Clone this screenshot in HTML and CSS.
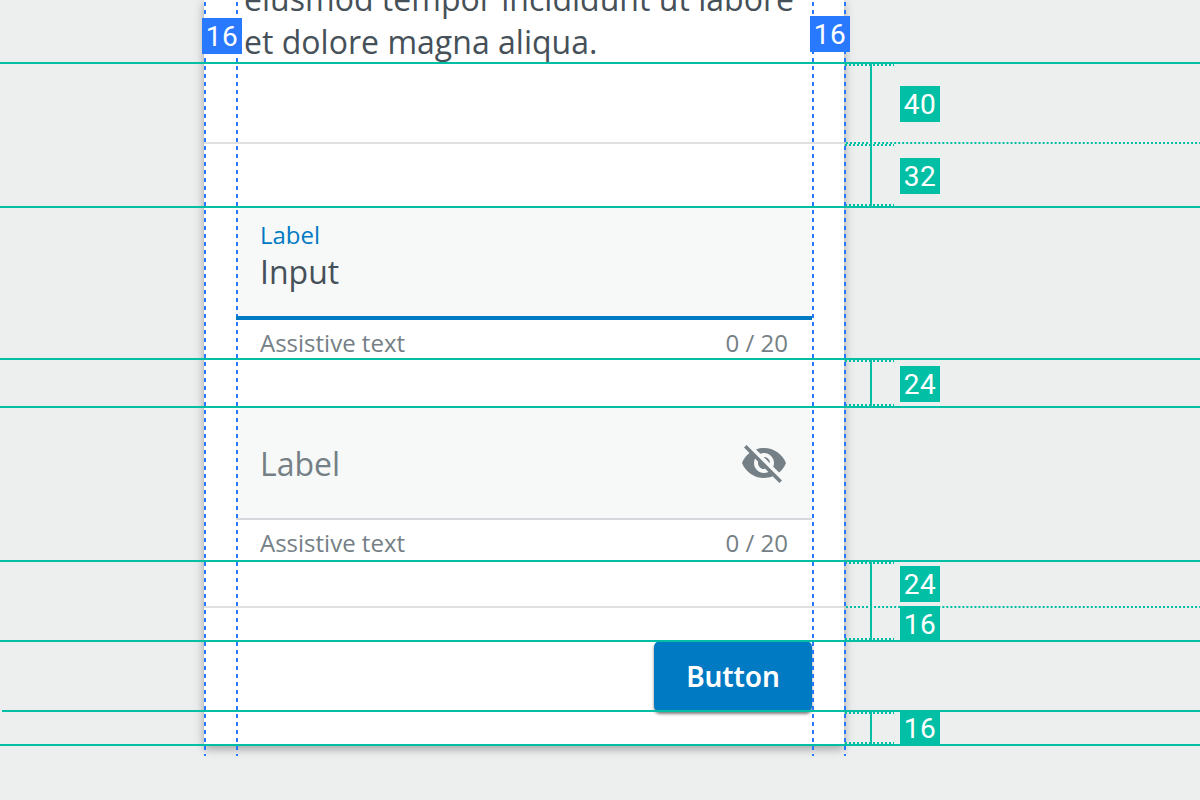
FILE: index.html
```html
<!DOCTYPE html>
<html lang="en">
<head>
<meta charset="utf-8">
<title>Form spacing</title>
<link rel="stylesheet" href="styles.css">
</head>
<body>
<main class="stage">
  <section class="card">
    <p class="copy">eiusmod tempor incididunt ut labore<br>et dolore magna aliqua.</p>
    <div class="fields">
      <div class="field field-active">
        <div class="box"><span class="float-label">Label</span><span class="value">Input</span></div>
        <div class="help"><span>Assistive text</span><span>0 / 20</span></div>
      </div>
      <div class="field">
        <div class="box box-rest"><span class="rest-label">Label</span>
          <svg class="eye" viewBox="0 0 24 24"><path d="M12 7c2.76 0 5 2.24 5 5 0 .65-.13 1.26-.36 1.83l2.92 2.92c1.51-1.26 2.7-2.89 3.43-4.75-1.73-4.39-6-7.5-11-7.5-1.4 0-2.74.25-3.98.7l2.16 2.16C10.74 7.13 11.35 7 12 7zM2 4.27l2.28 2.28.46.46C3.08 8.3 1.78 10.02 1 12c1.73 4.39 6 7.5 11 7.5 1.55 0 3.03-.3 4.38-.84l.42.42L19.73 22 21 20.73 3.27 3 2 4.27zM7.53 9.8l1.55 1.55c-.05.21-.08.43-.08.65 0 1.66 1.34 3 3 3 .22 0 .44-.03.65-.08l1.55 1.55c-.67.33-1.41.53-2.2.53-2.76 0-5-2.24-5-5 0-.79.2-1.53.53-2.2zm4.31-.78l3.15 3.15.02-.16c0-1.66-1.34-3-3-3l-.17.01z"/></svg>
        </div>
        <div class="help"><span>Assistive text</span><span>0 / 20</span></div>
      </div>
    </div>
    <div class="actions"><button class="button">Button</button></div>
  </section>
  <svg class="guides" viewBox="0 0 1200 800">
    <g class="ticks"><path d="M845 65H894M845 145H894M845 205H894M845 361H894M845 405H894M845 563H894M845 639H894M845 713H894M845 743H894"/></g>
    <g class="dotted"><path d="M846 143H1200M846 607H1200"/></g>
    <g class="columns"><path d="M205 2V756M237 2V756M813 2V756M845 2V756"/></g>
    <path class="active-line" d="M236 318H812"/>
    <g class="rows"><path d="M0 63H1200M0 207H1200M0 359H1200M0 407H1200M0 561H1200M0 641H1200M2 711H1200M0 745H1200"/>
    <path d="M871 64V206M871 360V406M871 562V640M871 712V744"/></g>
  </svg>
  <span class="tag tag-blue tag-left">16</span>
  <span class="tag tag-blue tag-right">16</span>
  <span class="tag gap-40">40</span>
  <span class="tag gap-32">32</span>
  <span class="tag gap-24a">24</span>
  <span class="tag gap-24b">24</span>
  <span class="tag gap-16a">16</span>
  <span class="tag gap-16b">16</span>
</main>
</body>
</html>
```
FILE: styles.css
```css
* { box-sizing: border-box; }
body { margin: 0; background: #edefee; font-family: "Noto Sans", sans-serif; }
.stage { position: relative; width: 1200px; height: 800px; overflow: hidden; }
.card { width: 640px; height: 745px; margin-left: 204px; background: #fff; box-shadow: 0 4px 8px rgba(0,0,0,.26), 0 2px 14px rgba(0,0,0,.09); display: flex; flex-direction: column; }
.copy { margin: -23px 0 0; padding-left: 40px; height: 165px; font: 32px/43px "Open Sans", sans-serif; letter-spacing: .02px; color: #455058; white-space: nowrap; }
.fields { height: 466px; padding: 64px 32px 0; border-top: 2px solid #e0e0e0; border-bottom: 2px solid #e0e0e0; }
.field { height: 200px; }
.box { height: 112px; background: #f7f9f8; border-radius: 8px 8px 0 0; border-bottom: 4px solid #007ac3; padding: 11px 24px 0; display: flex; flex-direction: column; }
.float-label { font: 24px/32px "Open Sans", sans-serif; color: #007ac3; }
.value { font: 32px/42px "Open Sans", sans-serif; color: #455058; }
.help { display: flex; justify-content: space-between; padding: 7px 24px 0; font: 24px/32px "Open Sans", sans-serif; color: #757f86; }
.box-rest { border-bottom: 2px solid #d4d7dc; border-radius: 8px 8px 0 0; flex-direction: row; align-items: center; justify-content: space-between; padding-top: 0; }
.rest-label { padding-top: 2px; font: 32px/42px "Open Sans", sans-serif; color: #757f86; }
.eye { width: 48px; height: 48px; fill: #757f86; }
.actions { display: flex; justify-content: flex-end; padding: 33px 32px 0 0; }
.button { width: 158px; height: 71px; border: 0; border-radius: 6px; background: #007ac3; color: #fff; font: 600 28px/71px "Noto Sans", sans-serif; letter-spacing: -.1px; padding: 0; box-shadow: 0 2px 3px rgba(0,0,0,.5); }
.guides { position: absolute; inset: 0; width: 1200px; height: 800px; fill: none; stroke-width: 2; shape-rendering: crispEdges; }
.columns { stroke: #2979ff; stroke-dasharray: 4 4; }
.active-line { stroke: #007ac3; stroke-width: 4; }
.rows, .ticks, .dotted { stroke: #00bfa5; }
.ticks { stroke-dasharray: 2 2; }
.dotted { stroke-dasharray: 2 2.013; shape-rendering: geometricPrecision; }
.tag { position: absolute; left: 900px; width: 40px; height: 36px; background: #00bfa5; color: #fff; font: 28px/38px Roboto, sans-serif; text-align: center; letter-spacing: .4px; }
.tag-blue { background: #2979ff; }
.tag-left { left: 202px; top: 18px; }
.tag-right { left: 810px; top: 16px; }
.gap-40 { top: 86px; }
.gap-32 { top: 158px; }
.gap-24a { top: 366px; }
.gap-24b { top: 566px; }
.gap-16a { top: 606px; }
.gap-16b { top: 710px; }
```
